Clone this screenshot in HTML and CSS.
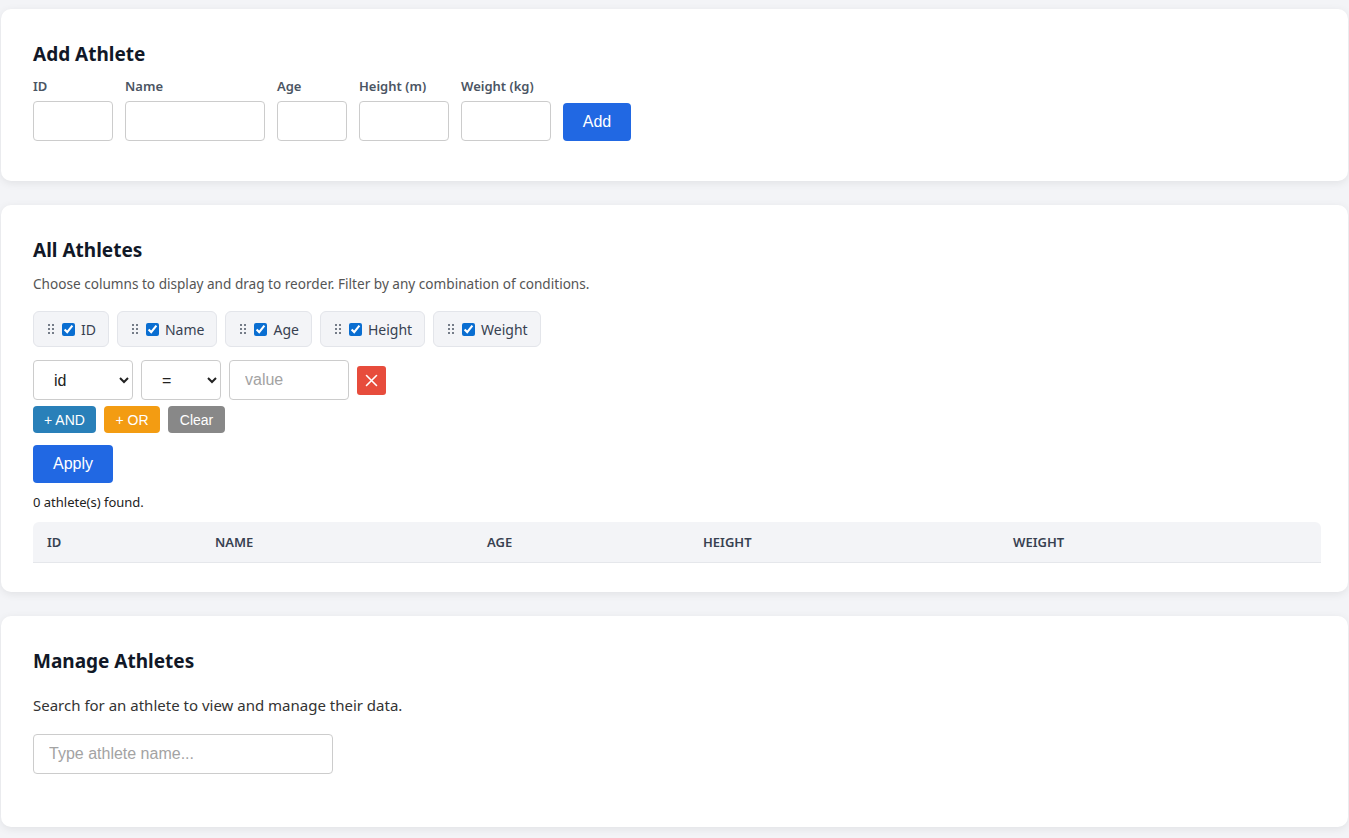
FILE: index.html
```html
<!DOCTYPE html>
<html lang="en">
<head>
    <meta charset="UTF-8">
    <meta name="viewport" content="width=device-width, initial-scale=1.0">
    <title>Athletes</title>
    <link rel="stylesheet" href="styles.css">
</head>
<body>
    <section class="card card-add">
        <h2>Add Athlete</h2>
        <form class="add-form">
            <div class="field">
                <label>ID</label>
                <input type="text" class="w-id">
            </div>
            <div class="field">
                <label>Name</label>
                <input type="text" class="w-name">
            </div>
            <div class="field">
                <label>Age</label>
                <input type="text" class="w-age">
            </div>
            <div class="field">
                <label>Height (m)</label>
                <input type="text" class="w-num">
            </div>
            <div class="field">
                <label>Weight (kg)</label>
                <input type="text" class="w-num">
            </div>
            <button type="button" class="btn-primary btn-add">Add</button>
        </form>
    </section>

    <section class="card card-all">
        <h2>All Athletes</h2>
        <p class="hint">Choose columns to display and drag to reorder. Filter by any combination of conditions.</p>

        <div class="columns">
            <label class="chip">
                <svg class="grip" width="6" height="10" viewBox="0 0 6 10"><circle cx="1" cy="1" r="1"/><circle cx="5" cy="1" r="1"/><circle cx="1" cy="5" r="1"/><circle cx="5" cy="5" r="1"/><circle cx="1" cy="9" r="1"/><circle cx="5" cy="9" r="1"/></svg>
                <input type="checkbox" checked> ID
            </label>
            <label class="chip">
                <svg class="grip" width="6" height="10" viewBox="0 0 6 10"><circle cx="1" cy="1" r="1"/><circle cx="5" cy="1" r="1"/><circle cx="1" cy="5" r="1"/><circle cx="5" cy="5" r="1"/><circle cx="1" cy="9" r="1"/><circle cx="5" cy="9" r="1"/></svg>
                <input type="checkbox" checked> Name
            </label>
            <label class="chip">
                <svg class="grip" width="6" height="10" viewBox="0 0 6 10"><circle cx="1" cy="1" r="1"/><circle cx="5" cy="1" r="1"/><circle cx="1" cy="5" r="1"/><circle cx="5" cy="5" r="1"/><circle cx="1" cy="9" r="1"/><circle cx="5" cy="9" r="1"/></svg>
                <input type="checkbox" checked> Age
            </label>
            <label class="chip">
                <svg class="grip" width="6" height="10" viewBox="0 0 6 10"><circle cx="1" cy="1" r="1"/><circle cx="5" cy="1" r="1"/><circle cx="1" cy="5" r="1"/><circle cx="5" cy="5" r="1"/><circle cx="1" cy="9" r="1"/><circle cx="5" cy="9" r="1"/></svg>
                <input type="checkbox" checked> Height
            </label>
            <label class="chip">
                <svg class="grip" width="6" height="10" viewBox="0 0 6 10"><circle cx="1" cy="1" r="1"/><circle cx="5" cy="1" r="1"/><circle cx="1" cy="5" r="1"/><circle cx="5" cy="5" r="1"/><circle cx="1" cy="9" r="1"/><circle cx="5" cy="9" r="1"/></svg>
                <input type="checkbox" checked> Weight
            </label>
        </div>

        <div class="filter-row">
            <select class="sel-field">
                <option>id</option>
                <option>name</option>
                <option>age</option>
                <option>height</option>
                <option>weight</option>
            </select>
            <select class="sel-op">
                <option>=</option>
                <option>&lt;</option>
                <option>&gt;</option>
            </select>
            <input type="text" class="filter-value" placeholder="value">
            <button type="button" class="btn-remove">
                <svg width="13" height="13" viewBox="0 0 13 13"><path d="M1.5 1.5l10 10M11.5 1.5l-10 10" stroke="#fff" stroke-width="1.6" stroke-linecap="round"/></svg>
            </button>
        </div>

        <div class="filter-actions">
            <button type="button" class="btn-small btn-and">+ AND</button>
            <button type="button" class="btn-small btn-or">+ OR</button>
            <button type="button" class="btn-small btn-clear">Clear</button>
        </div>

        <button type="button" class="btn-primary btn-apply">Apply</button>

        <p class="count">0 athlete(s) found.</p>

        <table class="athletes">
            <thead>
                <tr>
                    <th class="c-id">ID</th>
                    <th class="c-name">Name</th>
                    <th class="c-age">Age</th>
                    <th class="c-height">Height</th>
                    <th>Weight</th>
                </tr>
            </thead>
            <tbody></tbody>
        </table>
    </section>

    <section class="card card-manage">
        <h2>Manage Athletes</h2>
        <p class="lead">Search for an athlete to view and manage their data.</p>
        <input type="text" class="search" placeholder="Type athlete name...">
    </section>
</body>
</html>
```

FILE: styles.css
```css
body {
    font-family: "Noto Sans", "Open Sans", sans-serif;
    background-color: #f3f4f7;
    color: #1f2937;
    margin: 0;
    padding: 9px 1px 11px 1px;
}

.card {
    background-color: white;
    border-radius: 10px;
    box-shadow: 0 2px 8px rgba(0, 0, 0, 0.08);
    padding: 32px 27px 32px 32px;
    margin-bottom: 24px;
}

.card h2 {
    font-size: 19px;
    font-weight: 700;
    color: #111827;
    margin: 0;
    line-height: 26px;
}

.card-add {
    padding-bottom: 40px;
}

.add-form {
    display: flex;
    align-items: flex-end;
    gap: 12px;
    margin-top: 10px;
}

.field {
    display: flex;
    flex-direction: column;
}

.field label {
    font-size: 13px;
    font-weight: 600;
    color: #4b5563;
    line-height: 18px;
    margin-bottom: 6px;
}

input[type="text"],
select {
    font-family: "Liberation Sans", Arial, sans-serif;
    font-size: 16px;
    height: 40px;
    box-sizing: border-box;
    border: 1px solid #ccc;
    border-radius: 4px;
    background-color: white;
    color: #222;
    padding: 0 15px;
    margin: 0;
}

input::placeholder {
    color: #a3a3a3;
}

.w-id { width: 80px; }
.w-name { width: 140px; }
.w-age { width: 70px; }
.w-num { width: 90px; }

.btn-primary {
    font-family: "Liberation Sans", Arial, sans-serif;
    font-size: 16px;
    color: white;
    background-color: #2168e3;
    border: none;
    border-radius: 4px;
    height: 38px;
    cursor: pointer;
}

.btn-add {
    width: 68px;
}

.hint {
    font-size: 13.6px;
    color: #555;
    margin: 12px 0 0 0;
    line-height: 18px;
}

.columns {
    display: flex;
    gap: 8px;
    margin-top: 18px;
}

.chip {
    display: flex;
    align-items: center;
    height: 36px;
    box-sizing: border-box;
    padding: 0 12px 0 14px;
    background-color: #f3f4f7;
    border: 1px solid #e3e5ea;
    border-radius: 6px;
    font-size: 14px;
    color: #374151;
    cursor: grab;
}

.grip {
    fill: #4b5563;
    margin-right: 8px;
}

.chip input {
    width: 13px;
    height: 13px;
    margin: 0 6px 0 0;
    accent-color: #0a6ed1;
}

.filter-row {
    display: flex;
    align-items: center;
    gap: 8px;
    margin-top: 13px;
}

.sel-field {
    width: 100px;
    padding: 0 10px 0 16px;
}

.sel-op {
    width: 80px;
    padding: 0 10px 0 16px;
}

.filter-value {
    width: 120px;
}

.btn-remove {
    width: 29px;
    height: 29px;
    border: none;
    border-radius: 3px;
    background-color: #e74c3c;
    display: flex;
    align-items: center;
    justify-content: center;
    padding: 0;
    cursor: pointer;
}

.filter-actions {
    display: flex;
    gap: 8px;
    margin-top: 6px;
}

.btn-small {
    font-family: "Liberation Sans", Arial, sans-serif;
    font-size: 14px;
    color: white;
    border: none;
    border-radius: 4px;
    height: 27px;
    padding: 0;
    cursor: pointer;
}

.btn-and { background-color: #2980b9; width: 63px; }
.btn-or { background-color: #f39c12; width: 56px; }
.btn-clear { background-color: #888; width: 57px; }

.btn-apply {
    display: block;
    width: 80px;
    margin-top: 12px;
}

.count {
    font-size: 13px;
    color: #222;
    margin: 10px 0 0 0;
    line-height: 18px;
}

.athletes {
    width: 100%;
    border-collapse: separate;
    border-spacing: 0;
    margin-top: 11px;
    margin-bottom: -3px;
}

.athletes th {
    background-color: #f3f4f7;
    border-bottom: 1px solid #e5e7eb;
    text-align: left;
    text-transform: uppercase;
    font-size: 13px;
    font-weight: 600;
    color: #374151;
    height: 41px;
    box-sizing: border-box;
    padding: 0 14px;
}

.athletes th:first-child {
    border-top-left-radius: 6px;
}

.athletes th:last-child {
    border-top-right-radius: 6px;
}

.c-id { width: 168px; }
.c-name { width: 272px; }
.c-age { width: 216px; }
.c-height { width: 310px; }

.card-manage {
    padding-bottom: 53px;
}

.lead {
    font-size: 15px;
    color: #333;
    margin: 20px 0 0 0;
    line-height: 22px;
}

.card-manage .search {
    width: 300px;
    margin-top: 18px;
    display: block;
}
```
